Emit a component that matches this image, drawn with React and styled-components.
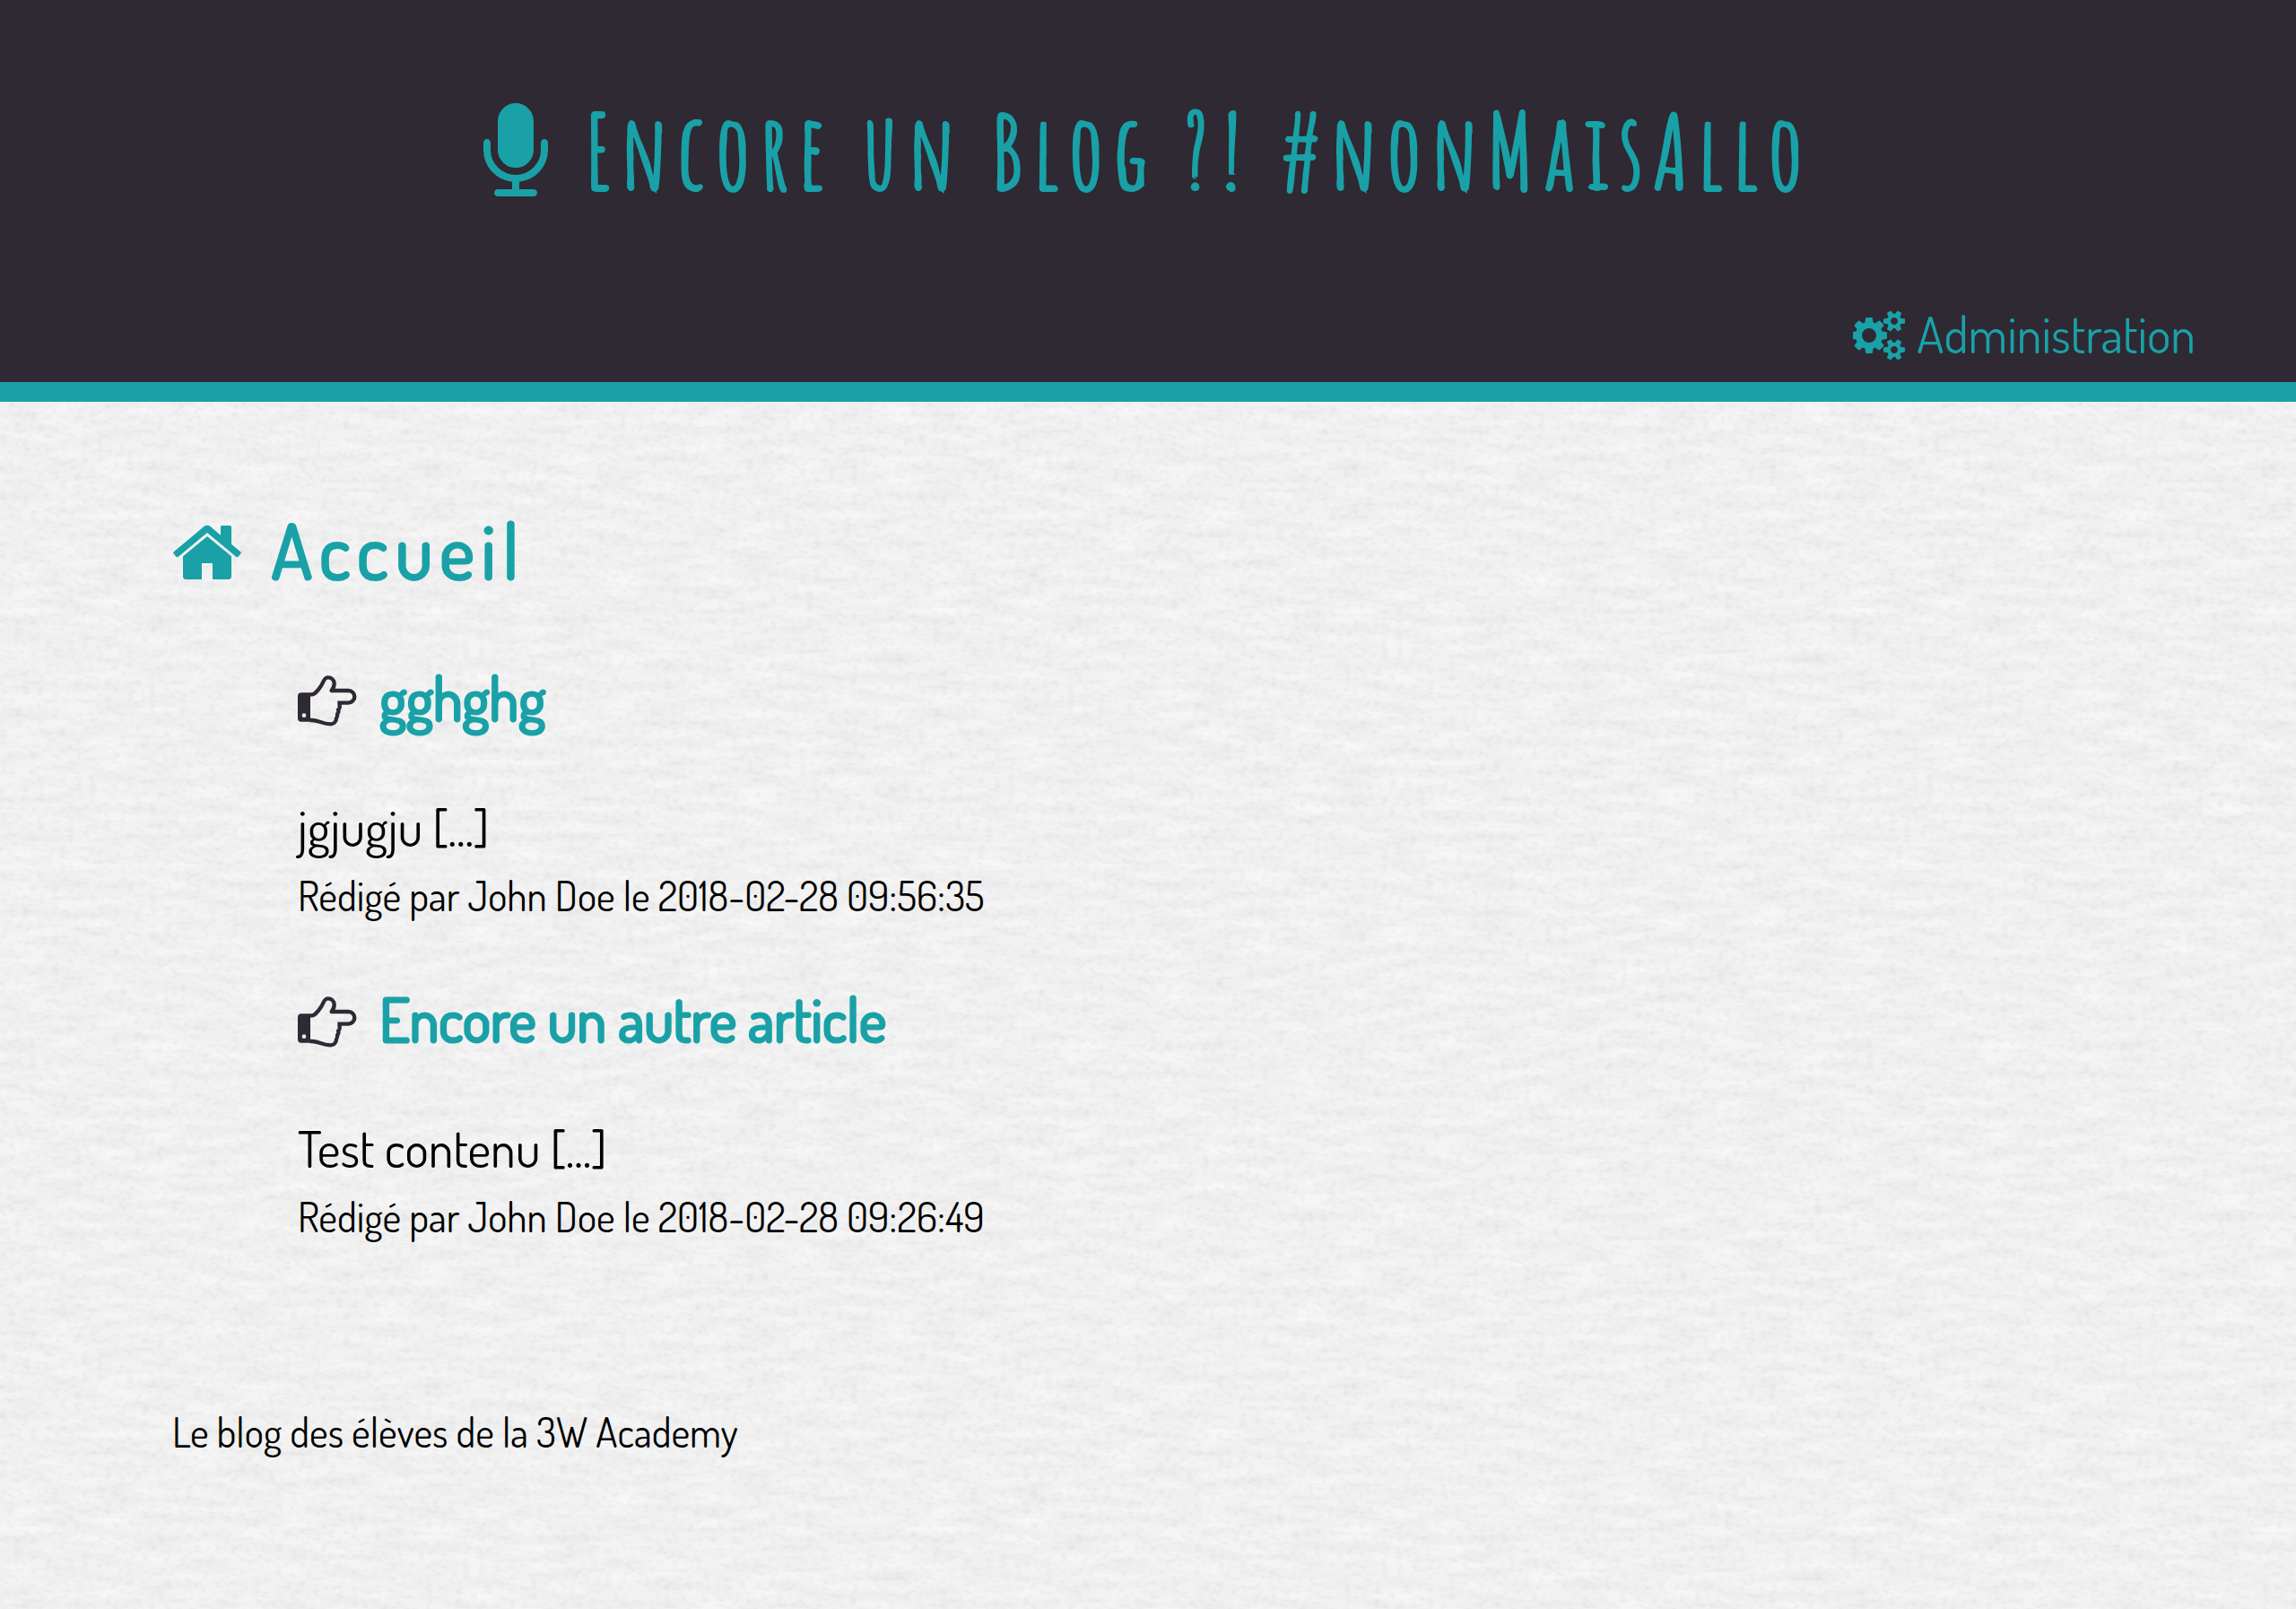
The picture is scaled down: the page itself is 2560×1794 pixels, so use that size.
import React from "react";
import styled, { createGlobalStyle } from "styled-components";

const TEAL = "#19a1a7";
const INK = "#2f2933";

const paper = `<svg xmlns="http://www.w3.org/2000/svg" width="1024" height="1024">
<filter id="w" x="0" y="0" width="100%" height="100%" color-interpolation-filters="sRGB">
<feTurbulence type="fractalNoise" baseFrequency="0.02 0.095" numOctaves="1" seed="7" stitchTiles="stitch"/>
<feColorMatrix values="0.08 0 0 0 0.903 0.08 0 0 0 0.903 0.08 0 0 0 0.903 0 0 0 0 1"/>
</filter>
<filter id="g" x="0" y="0" width="100%" height="100%" color-interpolation-filters="sRGB">
<feTurbulence type="fractalNoise" baseFrequency="0.12 0.2" numOctaves="2" seed="3" stitchTiles="stitch"/>
<feColorMatrix values="1 0 0 0 0.445 1 0 0 0 0.445 1 0 0 0 0.445 0 0 0 0 0.09"/>
</filter>
<rect width="1024" height="1024" filter="url(#w)"/>
<rect width="1024" height="1024" filter="url(#g)"/>
</svg>`;
const paperUrl = `url("data:image/svg+xml,${encodeURIComponent(paper)}")`;

const GlobalStyle = createGlobalStyle`
  *, *::before, *::after { box-sizing: border-box; }
  body {
    margin: 0;
    min-height: 100vh;
    background: #f1f1f1 ${paperUrl};
    color: #000;
    font-family: "Dosis", "Roboto Condensed", "Open Sans", sans-serif;
    font-size: 56px;
    line-height: 72px;
  }
`;

const Header = styled.header`
  display: flex;
  flex-direction: column;
  gap: 98px;
  padding: 98px 112px 18px;
  background: ${INK};
  border-bottom: 22px solid ${TEAL};
  color: ${TEAL};
`;

const SiteTitle = styled.h1`
  margin: 0;
  font-family: "Amatic SC", "Roboto Condensed", sans-serif;
  font-size: 112px;
  line-height: 140px;
  font-weight: 400;
  -webkit-text-stroke: 4px currentColor;
  letter-spacing: 11px;
  text-align: center;
`;

const Nav = styled.nav`
  display: flex;
  justify-content: flex-end;
`;

const Link = styled.a`
  color: ${TEAL};
  text-decoration: none;
`;

const Icon = styled.svg`
  height: 1em;
  vertical-align: -0.14em;
  margin-right: ${(p) => p.$gap}px;
  color: ${(p) => p.$color || "inherit"};
  fill: currentColor;
`;

const Main = styled.main`
  padding: 112px 192px 0;
`;

const PageTitle = styled.h2`
  margin: 0;
  color: ${TEAL};
  font-size: 84px;
  line-height: 106px;
  font-weight: 400;
  -webkit-text-stroke: 3px currentColor;
  letter-spacing: 8px;
`;

const Articles = styled.div`
  display: flex;
  flex-direction: column;
  gap: 67px;
  padding: 70px 140px 0;
`;

const ArticleTitle = styled.h3`
  margin: 0 0 66px;
  font-size: 66px;
  line-height: 84px;
  font-weight: 400;
`;

const ArticleLink = styled(Link)`
  -webkit-text-stroke: 3px currentColor;
`;

const Excerpt = styled.p`
  margin: 0 0 13px;
`;

const Small = styled.p`
  margin: 0;
  font-size: 45px;
  line-height: 56px;
`;

const Footer = styled.footer`
  padding: 184px 192px 112px;
`;

const Microphone = () => (
  <Icon viewBox="320 0 1152 1792" $gap={12} aria-hidden="true">
    <path d="M1472 704v128q0 221-147.500 384.500t-364.500 187.500v132h256q26 0 45 19t19 45-19 45-45 19h-640q-26 0-45-19t-19-45 19-45 45-19h256v-132q-217-24-364.500-187.500t-147.500-384.500v-128q0-26 19-45t45-19 45 19 19 45v128q0 185 131.500 316.500t316.500 131.500 316.500-131.500 131.500-316.500v-128q0-26 19-45t45-19 45 19 19 45zm-256-384v512q0 132-94 226t-226 94-226-94-94-226v-512q0-132 94-226t226-94 226 94 94 226z" />
  </Icon>
);

const Home = () => (
  <Icon viewBox="64 0 1664 1792" $gap={8} aria-hidden="true">
    <path d="M1472 992v480q0 26-19 45t-45 19h-384v-384h-256v384h-384q-26 0-45-19t-19-45v-480q0-1 .5-3t.5-3l575-474 575 474q1 2 1 6zm223-69l-62 74q-8 9-21 11h-3q-13 0-21-7l-692-577-692 577q-12 8-24 7-13-2-21-11l-62-74q-8-10-7-23.500t11-21.500l719-599q32-26 76-26t76 26l244 204v-195q0-14 9-23t23-9h192q14 0 23 9t9 23v408l219 182q10 8 11 21.500t-7 23.500z" />
  </Icon>
);

const SMALL_COG =
  "v140q0 16-149 31-12 27-30 52 51 113 51 138 0 4-4 7-122 71-124 71-8 0-46-47t-52-68q-20 2-30 2t-30-2q-14 21-52 68t-46 47q-2 0-124-71-4-3-4-7 0-25 51-138-18-25-30-52-149-15-149-31v-140q0-16 149-31 13-29 30-52-51-113-51-138 0-4 4-7 4-2 35-20t59-34 30-16q8 0 46 46.500t52 67.500q20-2 30-2t30 2q51-71 92-112l6-2q4 0 124 70 4 3 4 7 0 25-51 138 17 23 30 52 149 15 149 31z";

const Cogs = () => (
  <Icon viewBox="0 0 1920 1792" $gap={0} aria-hidden="true">
    <path
      fillRule="evenodd"
      d={
        "M832 896q0-106-75-181t-181-75-181 75-75 181 75 181 181 75 181-75 75-181zm384-91v185q0 10-7 19.500t-16 10.500l-155 24q-11 35-32 76 34 48 90 115 7 11 7 20 0 12-7 19-23 30-82.500 89.500t-78.500 59.500q-11 0-21-7l-115-90q-37 19-77 31-11 108-23 155-7 24-30 24h-186q-11 0-20-7.500t-10-17.500l-23-153q-34-10-75-31l-118 89q-7 7-20 7-11 0-21-8-144-133-144-160 0-9 7-19 10-14 41-53t47-61q-23-44-35-82l-152-24q-10-1-17-9.500t-7-19.500v-185q0-10 7-19.500t16-10.500l155-24q11-35 32-76-34-48-90-115-7-11-7-20 0-12 7-20 22-30 82-89t79-59q11 0 21 7l115 90q34-18 77-32 11-108 23-154 7-24 30-24h186q11 0 20 7.500t10 17.500l23 153q34 10 75 31l118-89q8-7 20-7 11 0 21 8 144 133 144 160 0 8-7 19-12 16-42 54t-45 60q23 48 34 82l152 23q10 2 17 10.500t7 19.500z" +
        "M1600 1408q0-52-38-90t-90-38-90 38-38 90q0 53 37.500 90.500t90.500 37.500 90.500-37.500 37.500-90.500z" +
        "M1600 384q0-52-38-90t-90-38-90 38-38 90q0 53 37.500 90.500t90.500 37.500 90.500-37.500 37.500-90.500z" +
        "M1856 1338" + SMALL_COG +
        "M1856 314" + SMALL_COG
      }
    />
  </Icon>
);

const Hand = () => (
  <Icon viewBox="36 18 198 198" $gap={12} $color={INK} aria-hidden="true">
    <path
      fillRule="evenodd"
      d="M48 94h30v97h-30a12 12 0 0 1-12-12v-73a12 12 0 0 1 12-12zM64 170a7 7 0 1 0-14 0a7 7 0 1 0 14 0z"
    />
    <path
      d="M76 100h8c8 0 22-16 30-29c7-10 10-28 22-28c13 0 22 8 22 21c0 10-4 17-9 23h56c12 0 21 9 21 20s-9 21-21 21h-36M175 131c1 4 2 8 1 12c-1 4-3 7-5 8c3 5 1 10-3 15c2 5-1 10-3 14c0 11-8 19-20 19c-26 0-40-13-62-13h-6"
      fill="none"
      stroke="currentColor"
      strokeWidth="13"
      strokeLinejoin="round"
    />
  </Icon>
);

const ARTICLES = [
  { title: "gghghg", excerpt: "jgjugju", author: "John Doe", date: "2018-02-28 09:56:35" },
  { title: "Encore un autre article", excerpt: "Test contenu", author: "John Doe", date: "2018-02-28 09:26:49" },
];

export default function App() {
  return (
    <>
      <GlobalStyle />
      <Header>
        <SiteTitle>
          <Microphone /> Encore un Blog ?! #nonMaisAllo
        </SiteTitle>
        <Nav>
          <Link href="#admin">
            <Cogs /> Administration
          </Link>
        </Nav>
      </Header>
      <Main>
        <PageTitle>
          <Home /> Accueil
        </PageTitle>
        <Articles>
          {ARTICLES.map((a) => (
            <article key={a.date}>
              <ArticleTitle>
                <Hand /> <ArticleLink href="#article">{a.title}</ArticleLink>
              </ArticleTitle>
              <Excerpt>{a.excerpt} [...]</Excerpt>
              <Small>
                Rédigé par {a.author} le <time>{a.date}</time>
              </Small>
            </article>
          ))}
        </Articles>
      </Main>
      <Footer>
        <Small>Le blog des élèves de la 3W Academy</Small>
      </Footer>
    </>
  );
}
